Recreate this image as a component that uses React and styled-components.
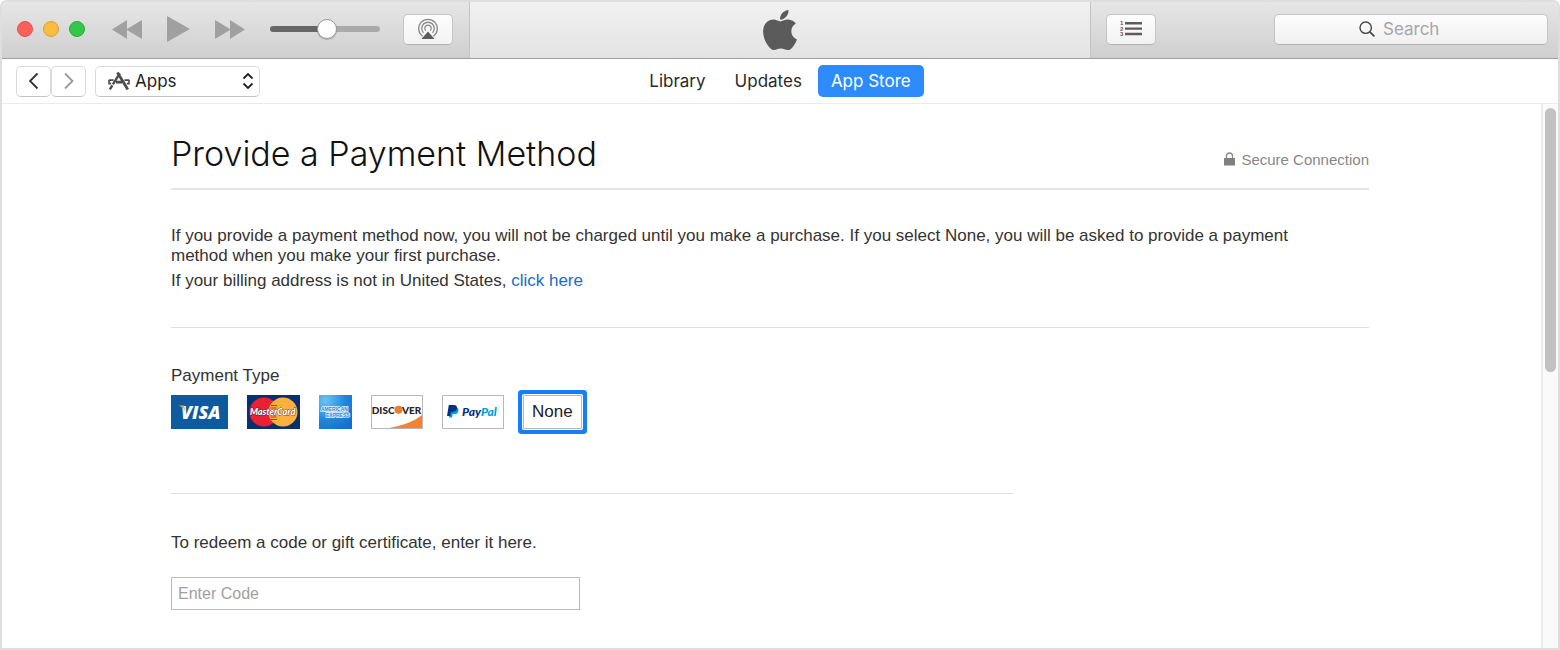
import React, { useState } from "react";
import styled, { createGlobalStyle } from "styled-components";
import { FaApple } from "react-icons/fa";

const GlobalStyle = createGlobalStyle`
  *,
  *::before,
  *::after {
    box-sizing: border-box;
  }

  body {
    margin: 0;
    background: #fff;
    color: #333;
    font-family: "Liberation Sans", Arial, sans-serif;
    font-size: 17px;
    line-height: 20px;
  }

  button,
  input,
  select {
    margin: 0;
    font: inherit;
  }
`;

const Window = styled.div`
  display: flex;
  flex-direction: column;
  min-height: 100vh;
  border: 2px solid #dedede;
  border-radius: 7px 7px 0 0;
  overflow: hidden;
  background: #fff;
`;

const Toolbar = styled.header`
  display: grid;
  grid-template-columns: minmax(0, 1fr) minmax(0, 622px) minmax(0, 1fr);
  height: 57px;
  border-bottom: 1px solid #9e9e9e;
  background: linear-gradient(#e6e6e6, #cfcfcf);
`;

const Controls = styled.div`
  display: flex;
  align-items: center;
  padding: 0 15px 2px;
`;

const Lights = styled.div`
  display: flex;
  gap: 10px;
  margin-right: 27px;
`;

const Light = styled.button`
  width: 16px;
  height: 16px;
  padding: 0;
  border: 1px solid ${(props) => props.$edge};
  border-radius: 50%;
  background: ${(props) => props.$color};
`;

const Transport = styled.div`
  display: flex;
  align-items: center;
  gap: 25px;
  margin-right: 25px;
`;

const IconButton = styled.button`
  display: flex;
  padding: 0;
  border: 0;
  background: none;
  color: #a0a0a0;
`;

const Volume = styled.input`
  appearance: none;
  width: 110px;
  height: 20px;
  margin-right: 23px;
  background: none;

  &::-webkit-slider-runnable-track {
    height: 6px;
    border-radius: 3px;
    background: linear-gradient(90deg, #666 50%, #aaa 50%);
  }

  &::-webkit-slider-thumb {
    appearance: none;
    width: 20px;
    height: 20px;
    margin-top: -7px;
    border: 1px solid #999;
    border-radius: 50%;
    background: #fff;
    box-shadow: 0 1px 1px rgba(0, 0, 0, 0.2);
  }
`;

const ToolButton = styled.button`
  display: flex;
  flex-shrink: 0;
  align-items: center;
  justify-content: center;
  width: 50px;
  height: 31px;
  padding: 0;
  border: 1px solid #c6c6c6;
  border-bottom-color: #b2b2b2;
  border-radius: 5px;
  background: linear-gradient(#fdfdfd, #f2f2f2);
`;

const Display = styled.div`
  display: flex;
  align-items: center;
  justify-content: center;
  border: solid #c4c4c4;
  border-width: 0 1px;
  background: linear-gradient(#f1f1f1, #e3e3e3);
  color: #5b5b5b;
`;

const ToolbarEnd = styled.div`
  display: flex;
  align-items: center;
  justify-content: space-between;
  gap: 15px;
  padding: 0 10px 2px 15px;
`;

const SearchBox = styled.label`
  display: flex;
  flex: 0 1 274px;
  align-items: center;
  justify-content: center;
  gap: 8px;
  height: 31px;
  border: 1px solid #c6c6c6;
  border-bottom-color: #b2b2b2;
  border-radius: 5px;
  background: linear-gradient(#fdfdfd, #f0f0f0);
`;

const SearchInput = styled.input`
  width: 80px;
  padding: 0;
  border: 0;
  outline: 0;
  background: none;
  font-family: Inter, sans-serif;

  &::placeholder {
    color: #a6a6a6;
    opacity: 1;
  }
`;

const NavBar = styled.nav`
  display: grid;
  grid-template-columns: 1fr auto 1fr;
  align-items: center;
  height: 45px;
  padding: 0 14px;
  border-bottom: 1px solid #ebebeb;
  font-family: Inter, sans-serif;
`;

const NavStart = styled.div`
  display: flex;
  align-items: center;
`;

const ArrowButton = styled.button`
  display: flex;
  align-items: center;
  justify-content: center;
  width: 35px;
  height: 31px;
  padding: 0;
  border: 1px solid #dadada;
  border-bottom-color: #c4c4c4;
  border-radius: 5px;
  background: #fff;
  color: ${(props) => (props.disabled ? "#999" : "#333")};
`;

const MediaPicker = styled.label`
  display: grid;
  grid-template-columns: 34px 1fr 22px;
  align-items: center;
  width: 165px;
  height: 31px;
  margin-left: 9px;
  border: 1px solid #dadada;
  border-bottom-color: #c4c4c4;
  border-radius: 5px;

  svg {
    grid-row: 1;
    grid-column: 3;
    justify-self: center;
    pointer-events: none;
  }

  svg:first-child {
    grid-column: 1;
    justify-self: end;
  }
`;

const MediaSelect = styled.select`
  grid-row: 1;
  grid-column: 1 / -1;
  appearance: none;
  height: 29px;
  padding: 0 24px 0 39px;
  border: 0;
  outline: 0;
  background: none;
  color: #222;
`;

const Tabs = styled.div`
  display: flex;
  gap: 3px;
`;

const Tab = styled.a`
  padding: 6px 13px;
  border-radius: 5px;
  background: ${(props) => (props.$active ? "#2d8bfb" : "none")};
  color: ${(props) => (props.$active ? "#fff" : "#2a2a2a")};
  text-decoration: none;
`;

const Body = styled.div`
  display: flex;
  flex: 1;
`;

const Page = styled.main`
  flex: 1;
  min-width: 0;
  padding: 26px 172px 38px 169px;
`;

const ScrollTrack = styled.div`
  width: 17px;
  padding: 4px 2px;
  border-left: 2px solid #ebebeb;
  background: #fafafa;
`;

const ScrollThumb = styled.div`
  height: 264px;
  border-radius: 6px;
  background: #c1c1c1;
`;

const PageHeader = styled.div`
  display: flex;
  align-items: center;
  justify-content: space-between;
  padding-bottom: 10px;
  border-bottom: 2px solid #e6e6e6;
`;

const Title = styled.h1`
  margin: 0;
  color: #111;
  font-family: Inter, sans-serif;
  font-size: 34px;
  font-weight: 300;
  line-height: 48px;
`;

const Secure = styled.span`
  display: flex;
  align-items: center;
  gap: 6px;
  padding-top: 12px;
  color: #888;
  font-size: 15px;
`;

const Intro = styled.section`
  padding: 36px 40px 36px 0;
  border-bottom: 1px solid #dfdfdf;
`;

const Text = styled.p`
  margin: 0 0 5px;

  &:last-child {
    margin: 0;
  }
`;

const TextLink = styled.a`
  color: #1b6cc4;
  text-decoration: none;
`;

const PaymentTypes = styled.fieldset`
  display: block;
  max-width: 842px;
  margin: 0;
  padding: 38px 0 64px;
  border: 0;
  border-bottom: 1px solid #dfdfdf;
`;

const Legend = styled.legend`
  float: left;
  width: 100%;
  margin-bottom: 9px;
  padding: 0;
`;

const CardRow = styled.div`
  display: flex;
  gap: 19px;
  clear: both;
`;

const HiddenRadio = styled.input`
  position: absolute;
  opacity: 0;
  pointer-events: none;
`;

const Card = styled.label`
  display: flex;
  height: 34px;
  align-items: center;
  justify-content: center;
  border: ${(props) => (props.$framed ? "1px solid #b9b9b9" : "0")};
  color: #222;

  &:has(input:checked) {
    border-radius: 1px;
    box-shadow: 0 0 0 1px #fff, 0 0 0 5px #147efb;
  }
`;

const NoneLabel = styled.span`
  padding: 0 8px;
`;

const Redeem = styled.section`
  display: flex;
  flex-direction: column;
  align-items: flex-start;
  gap: 24px;
  padding-top: 39px;
`;

const CodeInput = styled.input`
  width: 100%;
  max-width: 409px;
  height: 33px;
  padding: 0 6px;
  border: 1px solid #bbb;
  outline: 0;
  font-size: 16px;

  &::placeholder {
    color: #a0a0a0;
    opacity: 1;
  }
`;

const SkipIcon = ({ back }) => (
  <svg width="30" height="19" viewBox="0 0 30 19" fill="currentColor">
    <path d={back ? "M0 9.5 15 0v9l15-9v19l-15-9v9z" : "M30 9.5 15 0v9L0 0v19l15-9v9z"} />
  </svg>
);

const PlayIcon = () => (
  <svg width="23" height="26" viewBox="0 0 23 26" fill="currentColor">
    <path d="M0 0l23 13L0 26z" />
  </svg>
);

const AirPlayIcon = () => (
  <svg width="22" height="22" viewBox="0 0 22 22" fill="none" stroke="#8a8a8a" strokeWidth="1.3">
    <path d="M5.6 18.2A9.3 9.3 0 1 1 16.4 18.2" />
    <path d="M6.6 14.8A6.2 6.2 0 1 1 15.4 14.8" />
    <path d="M8.8 12.6A3.2 3.2 0 1 1 13.2 12.6" />
    <path d="M11 13.5l6.6 7.5H4.4z" fill="#5c5c5c" stroke="none" />
  </svg>
);

const QueueIcon = () => (
  <svg width="24" height="18" viewBox="0 0 24 18" fill="#5c5c5c">
    <path d="M6 2h17v2.4H6zM6 7.4h17v2.4H6zM6 12.8h17v2.4H6z" />
    <g fontFamily="Liberation Sans" fontSize="6" fontWeight="700">
      <text x="1" y="5.4">1</text>
      <text x="1" y="10.8">2</text>
      <text x="1" y="16.2">3</text>
    </g>
  </svg>
);

const SearchIcon = () => (
  <svg width="16" height="16" viewBox="0 0 16 16" fill="none" stroke="#444" strokeWidth="1.4">
    <circle cx="6.7" cy="6.7" r="5.7" />
    <path d="M10.8 10.8l4.6 4.6" strokeWidth="1.7" />
  </svg>
);

const ChevronIcon = ({ flip }) => (
  <svg width="10" height="18" viewBox="0 0 10 18" fill="none" stroke="currentColor" strokeWidth="1.8">
    <path d={flip ? "M1 1.5L8.5 9 1 16.5" : "M8.5 1.5L1 9 8.5 16.5"} />
  </svg>
);

const AppsIcon = () => (
  <svg width="22" height="20" viewBox="0 0 22 20" fill="none" stroke="#4d4d4d">
    <path d="M9.4 1.4L19.8 18.4" strokeWidth="2.8" />
    <path d="M11.8 2.4L1.8 18.4" strokeWidth="2.4" strokeDasharray="13 1 5" />
    <path d="M.8 9.2h4.8M16.4 9.2h4.8" strokeWidth="1.8" />
    <path d="M1 9v3.600h2.200M21 9v3.600h-2.200" strokeWidth="1.6" />
    <path d="M8 11.200h6" strokeWidth="2.8" />
  </svg>
);

const UpDownIcon = () => (
  <svg width="12" height="18" viewBox="0 0 12 18" fill="none" stroke="#222" strokeWidth="1.8">
    <path d="M1.5 6.5L6 2l4.5 4.5M1.5 11.500L6 16l4.500-4.500" />
  </svg>
);

const LockIcon = () => (
  <svg width="11" height="16" viewBox="0 0 11 16">
    <path d="M2.5 7V4a3 3 0 0 1 6 0v3" fill="none" stroke="#888" strokeWidth="1.3" />
    <path d="M0 6h11v7.5H0z" fill="#808080" />
  </svg>
);

const VisaLogo = () => (
  <svg width="57" height="34" viewBox="0 0 57 34">
    <path d="M0 0h57v34H0z" fill="#0e5a9f" />
    <text x="10" y="23.5" fill="#fff" fontFamily="Open Sans" fontSize="18" fontWeight="800" fontStyle="italic">
      VISA
    </text>
    <path d="M7.5 10.4H13l1.6 6c-1.5-3-3.9-5.1-7.1-6z" fill="#f2a93b" />
  </svg>
);

const MasterCardLogo = () => (
  <svg width="53" height="34" viewBox="0 0 53 34">
    <path d="M0 0h53v34H0z" fill="#0a2f6e" />
    <circle cx="17" cy="17" r="14.5" fill="#ea2034" />
    <circle cx="36" cy="17" r="14.5" fill="#fbb040" />
    <path d="M24 10.5h6M23.5 13h6M23.5 22h6M24 24.5h6" stroke="#ea2034" strokeWidth="1.2" />
    <text
      x="3"
      y="20"
      fill="#fff"
      stroke="#5a1a2c"
      strokeWidth="0.8"
      paintOrder="stroke"
      fontFamily="Lato"
      fontSize="9"
      fontWeight="900"
      fontStyle="italic"
    >
      MasterCard
    </text>
  </svg>
);

const AmexLogo = () => (
  <svg width="33" height="34" viewBox="0 0 33 34">
    <defs>
      <radialGradient id="amex" cx="0.2" cy="0.15" r="1">
        <stop offset="0" stopColor="#6cc3f2" />
        <stop offset="0.6" stopColor="#1f86dc" />
        <stop offset="1" stopColor="#156fd0" />
      </radialGradient>
    </defs>
    <path d="M0 0h33v34H0z" fill="url(#amex)" />
    <g
      fill="#2a86d4"
      stroke="#e8f5ff"
      strokeWidth="1.4"
      paintOrder="stroke"
      fontFamily="Liberation Sans"
      fontSize="5"
      fontWeight="700"
    >
      <text x="2" y="16">AMERICAN</text>
      <text x="7" y="22">EXPRESS</text>
    </g>
  </svg>
);

const DiscoverLogo = () => (
  <svg width="50" height="32" viewBox="0 0 50 32">
    <path d="M17 32C31 29.5 42 25.5 50 19v13z" fill="#f58233" />
    <circle cx="26.5" cy="13.8" r="4" fill="#f47b2a" />
    <g fill="#222" fontFamily="Lato" fontSize="10" fontWeight="900">
      <text x="22.5" y="17.5" textAnchor="end">
        DISC
      </text>
      <text x="30" y="17.5">VER</text>
    </g>
  </svg>
);

const PayPalLogo = () => (
  <svg width="60" height="32" viewBox="0 0 60 32">
    <path d="M7.5 11.5h5c2.4 0 3.3 1.2 2.9 3.4-.5 2.3-2 3.2-4.2 3.2H9.7l-.6 3.4H6z" fill="#009cde" />
    <path d="M5.8 9h4.9c2.6 0 3.7 1.3 3.2 3.6-.5 2.3-2.1 3.3-4.4 3.3H7.9l-.7 4.1H4z" fill="#003087" />
    <text x="19" y="19.5" fontFamily="Lato" fontSize="12" fontWeight="900" fontStyle="italic">
      <tspan fill="#003087">Pay</tspan>
      <tspan fill="#009cde">Pal</tspan>
    </text>
  </svg>
);

const paymentTypes = [
  { id: "visa", name: "Visa", Logo: VisaLogo },
  { id: "mastercard", name: "MasterCard", Logo: MasterCardLogo },
  { id: "amex", name: "American Express", Logo: AmexLogo },
  { id: "discover", name: "Discover", Logo: DiscoverLogo, framed: true },
  { id: "paypal", name: "PayPal", Logo: PayPalLogo, framed: true },
  { id: "none", name: "None", framed: true },
];

const App = () => {
  const [payment, setPayment] = useState("none");

  return (
    <>
      <GlobalStyle />
      <Window>
        <Toolbar>
          <Controls>
            <Lights>
              <Light aria-label="Close" $color="#fc605c" $edge="#e0504c" />
              <Light aria-label="Minimize" $color="#fdbc40" $edge="#e0a030" />
              <Light aria-label="Zoom" $color="#34c84a" $edge="#27ab38" />
            </Lights>
            <Transport>
              <IconButton aria-label="Previous">
                <SkipIcon back />
              </IconButton>
              <IconButton aria-label="Play">
                <PlayIcon />
              </IconButton>
              <IconButton aria-label="Next">
                <SkipIcon />
              </IconButton>
            </Transport>
            <Volume type="range" aria-label="Volume" defaultValue="52" />
            <ToolButton aria-label="AirPlay">
              <AirPlayIcon />
            </ToolButton>
          </Controls>
          <Display>
            <FaApple size={46} />
          </Display>
          <ToolbarEnd>
            <ToolButton aria-label="Up Next">
              <QueueIcon />
            </ToolButton>
            <SearchBox>
              <SearchIcon />
              <SearchInput type="text" placeholder="Search" aria-label="Search" />
            </SearchBox>
          </ToolbarEnd>
        </Toolbar>

        <NavBar>
          <NavStart>
            <ArrowButton aria-label="Back">
              <ChevronIcon />
            </ArrowButton>
            <ArrowButton aria-label="Forward" disabled>
              <ChevronIcon flip />
            </ArrowButton>
            <MediaPicker>
              <AppsIcon />
              <MediaSelect aria-label="Media type">
                <option>Apps</option>
              </MediaSelect>
              <UpDownIcon />
            </MediaPicker>
          </NavStart>
          <Tabs>
            <Tab href="#library">Library</Tab>
            <Tab href="#updates">Updates</Tab>
            <Tab href="#store" $active>
              App Store
            </Tab>
          </Tabs>
        </NavBar>

        <Body>
          <Page>
            <PageHeader>
              <Title>Provide a Payment Method</Title>
              <Secure>
                <LockIcon />
                Secure Connection
              </Secure>
            </PageHeader>

            <Intro>
              <Text>
                If you provide a payment method now, you will not be charged until you make a purchase. If you select
                None, you will be asked to provide a payment method when you make your first purchase.
              </Text>
              <Text>
                If your billing address is not in United States, <TextLink href="#country">click here</TextLink>
              </Text>
            </Intro>

            <PaymentTypes>
              <Legend>Payment Type</Legend>
              <CardRow>
                {paymentTypes.map(({ id, name, Logo, framed }) => (
                  <Card key={id} $framed={framed}>
                    <HiddenRadio
                      type="radio"
                      name="payment"
                      aria-label={name}
                      checked={payment === id}
                      onChange={() => setPayment(id)}
                    />
                    {Logo ? <Logo /> : <NoneLabel>{name}</NoneLabel>}
                  </Card>
                ))}
              </CardRow>
            </PaymentTypes>

            <Redeem>
              <label htmlFor="code">To redeem a code or gift certificate, enter it here.</label>
              <CodeInput id="code" type="text" placeholder="Enter Code" />
            </Redeem>
          </Page>
          <ScrollTrack aria-hidden="true">
            <ScrollThumb />
          </ScrollTrack>
        </Body>
      </Window>
    </>
  );
};

export default App;
